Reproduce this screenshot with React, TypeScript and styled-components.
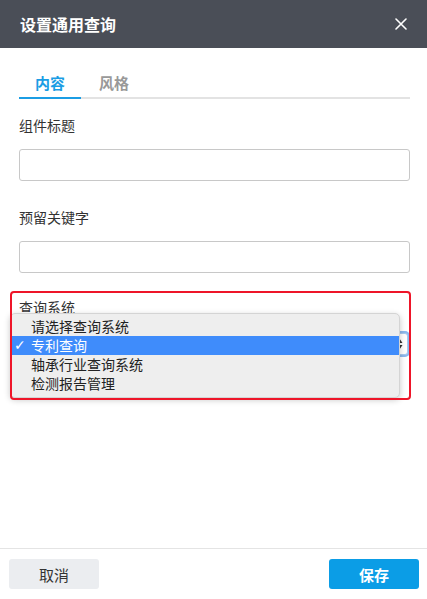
import React, { useState } from "react";
import styled, { createGlobalStyle } from "styled-components";

const GlobalStyle = createGlobalStyle`
  html, body {
    margin: 0;
    padding: 0;
    background: #ffffff;
  }
  body {
    font-family: "Noto Sans CJK SC", "Noto Sans", "Liberation Sans", sans-serif;
    color: #333333;
  }
  * {
    box-sizing: border-box;
  }
`;

const systems = ["请选择查询系统", "专利查询", "轴承行业查询系统", "检测报告管理"];

const App: React.FC = () => {
  const [tab, setTab] = useState(0);
  const [selected, setSelected] = useState(1);

  return (
    <>
      <GlobalStyle />
      <Dialog>
        <Header>
          <Title>设置通用查询</Title>
          <CloseButton aria-label="关闭">
            <svg width="12" height="12" viewBox="0 0 12 12">
              <path d="M1 1L11 11M11 1L1 11" stroke="#ffffff" strokeWidth="1.6" strokeLinecap="round" />
            </svg>
          </CloseButton>
        </Header>

        <Body>
          <Tabs>
            <Tab $active={tab === 0} onClick={() => setTab(0)}>内容</Tab>
            <Tab $active={tab === 1} onClick={() => setTab(1)}>风格</Tab>
          </Tabs>

          <Field>
            <Label>组件标题</Label>
            <Input type="text" />
          </Field>

          <Field>
            <Label>预留关键字</Label>
            <Input type="text" />
          </Field>

          <MarkedField>
            <Label>查询系统</Label>
            <SelectBox>
              <span>{systems[selected]}</span>
              <Arrows>
                <svg width="7" height="12" viewBox="0 0 7 12">
                  <path d="M3.5 0.5L6.5 5H0.5Z M3.5 11.5L6.5 7H0.5Z" fill="#333333" />
                </svg>
              </Arrows>
            </SelectBox>
            <Menu>
              {systems.map((s, i) => (
                <MenuItem key={s} $active={i === selected} onClick={() => setSelected(i)}>
                  <Check>{i === selected ? "✓" : ""}</Check>
                  {s}
                </MenuItem>
              ))}
            </Menu>
          </MarkedField>
        </Body>

        <Footer>
          <Button>取消</Button>
          <Button $primary>保存</Button>
        </Footer>
      </Dialog>
    </>
  );
};

export default App;

const Dialog = styled.div`
  width: 427px;
  height: 599px;
  display: flex;
  flex-direction: column;
  background: #ffffff;
`;

const Header = styled.div`
  height: 48px;
  flex-shrink: 0;
  background: #4a4e57;
  display: flex;
  align-items: center;
  justify-content: space-between;
  padding: 0 20px 0 20px;
`;

const Title = styled.div`
  color: #ffffff;
  font-size: 16px;
  font-weight: 700;
  line-height: 22px;
`;

const CloseButton = styled.button`
  width: 14px;
  height: 14px;
  border: none;
  background: transparent;
  padding: 0;
  display: flex;
  align-items: center;
  justify-content: center;
  cursor: pointer;
  margin-right: -1px;
`;

const Body = styled.div`
  flex: 1;
  padding: 20px 17px 0 19px;
  display: flex;
  flex-direction: column;
`;

const Tabs = styled.div`
  display: flex;
  gap: 2px;
  border-bottom: 2px solid #e3e3e3;
  margin-bottom: 16px;
`;

const Tab = styled.div<{ $active?: boolean }>`
  padding: 0 16px;
  height: 29px;
  line-height: 29px;
  font-size: 15px;
  font-weight: 700;
  color: ${(p) => (p.$active ? "#1b9de4" : "#999999")};
  margin-bottom: -2px;
  border-bottom: 2px solid ${(p) => (p.$active ? "#1b9de4" : "transparent")};
  cursor: pointer;
  box-sizing: content-box;
`;

const Field = styled.div`
  display: flex;
  flex-direction: column;
  margin-bottom: 26px;
`;

const Label = styled.div`
  font-size: 14px;
  line-height: 20px;
  color: #333333;
  margin-bottom: 14px;
`;

const Input = styled.input`
  height: 32px;
  width: 100%;
  border: 1px solid #c8c8c8;
  border-radius: 3px;
  padding: 0 10px;
  font-size: 14px;
  outline: none;
  font-family: inherit;
`;

const MarkedField = styled.div`
  position: relative;
  display: flex;
  flex-direction: column;
  margin-top: -2px;

  &::after {
    content: "";
    position: absolute;
    left: -9px;
    right: -1px;
    top: -6px;
    height: 105px;
    border: 2px solid #ee1529;
    border-radius: 4px;
    pointer-events: none;
  }

  ${Label} {
    margin-bottom: 14px;
  }
`;

const SelectBox = styled.div`
  height: 22px;
  margin: 2px 2px 0 0;
  display: flex;
  align-items: center;
  justify-content: space-between;
  padding: 0 4px 0 10px;
  border: 1px solid #a8c8ee;
  border-radius: 3px;
  box-shadow: 0 0 0 2px #8cb9ee;
  font-size: 14px;
  background: #ffffff;
`;

const Arrows = styled.span`
  display: flex;
  align-items: center;
`;

const Menu = styled.div`
  position: absolute;
  left: -9px;
  top: 16px;
  width: 390px;
  padding: 3px 0 4px;
  background: #eeeeee;
  border: 1px solid #d4d4d4;
  border-radius: 5px;
  box-shadow: 0 2px 6px rgba(0, 0, 0, 0.22);
`;

const MenuItem = styled.div<{ $active?: boolean }>`
  height: 19px;
  line-height: 19px;
  display: flex;
  align-items: center;
  font-size: 14px;
  color: ${(p) => (p.$active ? "#ffffff" : "#222222")};
  background: ${(p) => (p.$active ? "#3f8cfb" : "transparent")};
  cursor: default;
`;

const Check = styled.span`
  width: 20px;
  padding-left: 3px;
  font-size: 14px;
  font-weight: 700;
  font-family: "DejaVu Sans", sans-serif;
`;

const Footer = styled.div`
  flex-shrink: 0;
  height: 51px;
  border-top: 1px solid #e4e4e4;
  display: flex;
  justify-content: space-between;
  align-items: flex-start;
  padding: 10px 8px 0 9px;
`;

const Button = styled.button<{ $primary?: boolean }>`
  width: 90px;
  height: 30px;
  border: none;
  border-radius: 3px;
  font-family: inherit;
  font-size: 15px;
  font-weight: ${(p) => (p.$primary ? 700 : 400)};
  color: ${(p) => (p.$primary ? "#ffffff" : "#333333")};
  background: ${(p) => (p.$primary ? "#0b9de6" : "#ebedf0")};
  cursor: pointer;
`;
